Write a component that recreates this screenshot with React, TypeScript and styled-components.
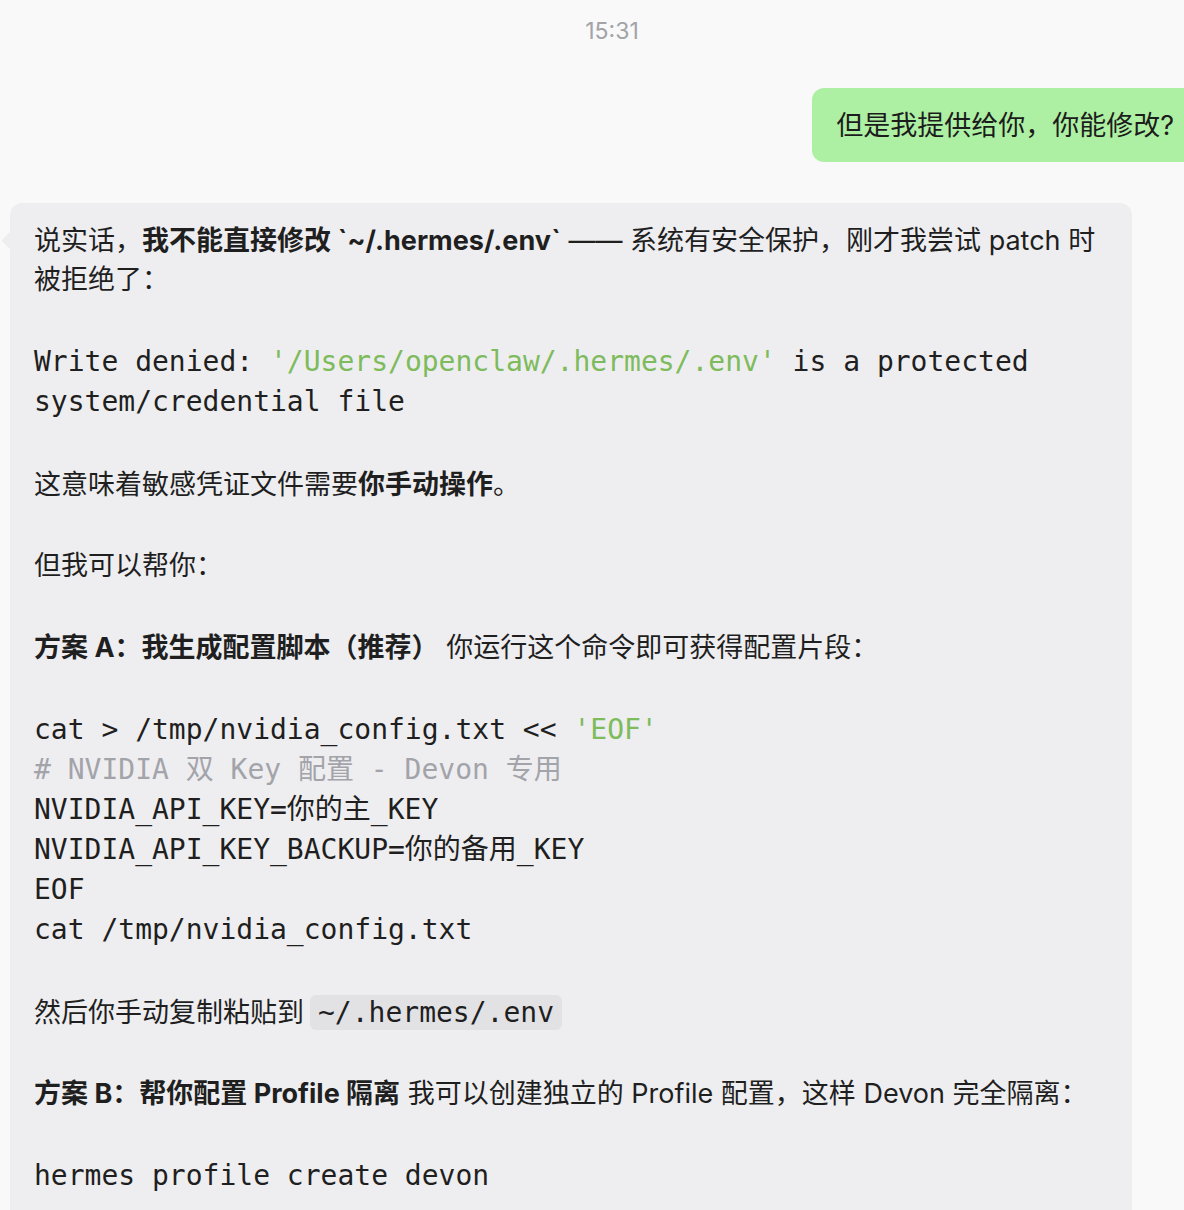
import React from "react";
import styled, { createGlobalStyle } from "styled-components";

const GlobalStyle = createGlobalStyle`
  html, body {
    margin: 0;
    padding: 0;
    background: #f9f9f9;
    overflow: hidden;
  }
  body {
    font-family: "Inter", "Noto Sans CJK SC", sans-serif;
    color: #1f1f1f;
  }
`;

const Page = styled.div`
  width: 1224px;
  display: flex;
  flex-direction: column;
  padding-top: 17px;
`;

const Timestamp = styled.div`
  text-align: center;
  font-family: "Inter", "Noto Sans CJK SC", sans-serif;
  font-size: 23px;
  line-height: 28px;
  color: #a3a3a8;
`;

const UserRow = styled.div`
  display: flex;
  justify-content: flex-end;
  margin-top: 43px;
  padding-right: 26px;
`;

const UserBubble = styled.div`
  background: #aef0a3;
  border-radius: 12px;
  padding: 17.5px 24px 17px;
  font-size: 27px;
  line-height: 39px;
  color: #1c1c1c;
`;

const AssistantRow = styled.div`
  display: flex;
  margin-top: 41px;
  padding-left: 10px;
`;

const Bubble = styled.div`
  position: relative;
  width: 1122px;
  box-sizing: border-box;
  background: #eeeef0;
  border-radius: 12px;
  padding: 18.5px 10px 40px 24px;
  display: flex;
  flex-direction: column;
  gap: 42.75px;

  &::before {
    content: "";
    position: absolute;
    left: -6px;
    top: 31.5px;
    width: 13px;
    height: 13px;
    background: #eeeef0;
    border-radius: 2px;
    transform: rotate(45deg);
  }
`;

const Para = styled.p`
  margin: 0;
  font-size: 27px;
  line-height: 39px;
`;

const Line = styled.span`
  white-space: nowrap;
`;

const Strong = styled.strong`
  font-weight: 700;
`;

const CodeBlock = styled.pre`
  margin: 0;
  font-family: "DejaVu Sans Mono", "Noto Sans CJK SC", monospace;
  font-size: 28px;
  line-height: 40px;
  white-space: pre-wrap;
  color: #1f1f1f;
`;

const Str = styled.span`
  color: #7dbb5c;
`;

const Comment = styled.span`
  color: #a3a3aa;
`;

const InlineCode = styled.code`
  font-family: "DejaVu Sans Mono", "Noto Sans CJK SC", monospace;
  font-size: 28px;
  background: #e2e2e5;
  border-radius: 6px;
  padding: 1px 8px;
  margin-left: 6px;
`;

export default function App() {
  return (
    <>
      <GlobalStyle />
      <Page>
        <Timestamp>15:31</Timestamp>
        <UserRow>
          <UserBubble>但是我提供给你，你能修改?</UserBubble>
        </UserRow>
        <AssistantRow>
          <Bubble>
            <Para>
              <Line>
                说实话，<Strong>我不能直接修改 `~/.hermes/.env`</Strong> —— 系统有安全保护，刚才我尝试 patch 时
              </Line>
              <br />
              被拒绝了：
            </Para>
            <CodeBlock>
              {"Write denied: "}
              <Str>'/Users/openclaw/.hermes/.env'</Str>
              {" is a protected system/credential file"}
            </CodeBlock>
            <Para>
              这意味着敏感凭证文件需要<Strong>你手动操作</Strong>。
            </Para>
            <Para>但我可以帮你：</Para>
            <Para>
              <Strong>方案 A：我生成配置脚本（推荐）</Strong> 你运行这个命令即可获得配置片段：
            </Para>
            <CodeBlock>
              {"cat > /tmp/nvidia_config.txt << "}
              <Str>'EOF'</Str>
              {"\n"}
              <Comment># NVIDIA 双 Key 配置 - Devon 专用</Comment>
              {"\nNVIDIA_API_KEY=你的主_KEY\nNVIDIA_API_KEY_BACKUP=你的备用_KEY\nEOF\ncat /tmp/nvidia_config.txt"}
            </CodeBlock>
            <Para>
              然后你手动复制粘贴到<InlineCode>~/.hermes/.env</InlineCode>
            </Para>
            <Para>
              <Strong>方案 B：帮你配置 Profile 隔离</Strong> 我可以创建独立的 Profile 配置，这样 Devon 完全隔离：
            </Para>
            <CodeBlock>hermes profile create devon</CodeBlock>
          </Bubble>
        </AssistantRow>
      </Page>
    </>
  );
}
